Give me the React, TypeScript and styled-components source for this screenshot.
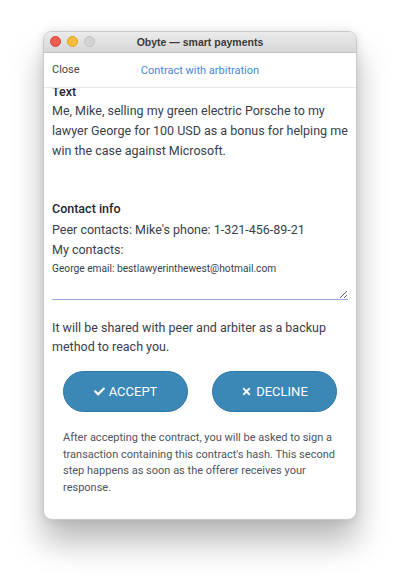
import React from "react";
import styled, { createGlobalStyle } from "styled-components";
import { FaCheck, FaTimes } from "react-icons/fa";

const Global = createGlobalStyle`
  html, body { margin: 0; padding: 0; background: #ffffff; }
  body { font-family: Roboto, "Liberation Sans", sans-serif; }
  * { box-sizing: border-box; }
`;

const Page = styled.div`
  width: 400px;
  height: 578px;
  padding: 31px 43px 0 43px;
  background: #ffffff;
`;

const Window = styled.div`
  width: 314px;
  height: 489px;
  border-radius: 9px;
  background: #ffffff;
  border: 1px solid #c9c9c9;
  box-shadow: 0 22px 32px rgba(0, 0, 0, 0.28), 0 0 10px rgba(0, 0, 0, 0.1);
  overflow: hidden;
  display: flex;
  flex-direction: column;
`;

const TitleBar = styled.div`
  position: relative;
  height: 21px;
  flex: none;
  display: flex;
  align-items: center;
  justify-content: center;
  background: linear-gradient(#ebebeb, #d7d7d7);
  border-bottom: 1px solid #c2c2c2;
`;

const Lights = styled.div`
  position: absolute;
  left: 6px;
  top: 4px;
  display: flex;
  gap: 6px;
`;

const Light = styled.span<{ $c: string; $b: string }>`
  width: 11px;
  height: 11px;
  border-radius: 50%;
  background: ${(p) => p.$c};
  border: 0.5px solid ${(p) => p.$b};
`;

const Title = styled.div`
  font-family: "Liberation Sans", Arial, sans-serif;
  font-weight: bold;
  font-size: 10.5px;
  color: #3b3b3b;
`;

const Header = styled.div`
  position: relative;
  height: 35px;
  flex: none;
  display: flex;
  align-items: center;
  justify-content: center;
  border-bottom: 1px solid #e6e6e6;
`;

const CloseLink = styled.span`
  position: absolute;
  left: 8px;
  top: 10px;
  font-size: 11px;
  color: #444;
`;

const HeaderTitle = styled.span`
  font-size: 11px;
  color: #4a86d8;
`;

const Body = styled.div`
  flex: 1;
  overflow: hidden;
  padding: 0 8px 0 8px;
  color: #3a404b;
`;

const Label = styled.div<{ $top?: number }>`
  font-size: 12.5px;
  font-weight: 500;
  line-height: 16px;
  color: #1f2633;
  margin-top: ${(p) => p.$top ?? 0}px;
`;

const Paragraph = styled.div<{ $top?: number; $lh?: number }>`
  font-size: 12.5px;
  line-height: ${(p) => p.$lh ?? 20}px;
  margin-top: ${(p) => p.$top ?? 0}px;
`;

const TextArea = styled.textarea`
  display: block;
  width: 100%;
  height: 40px;
  margin: 0;
  padding: 2px 0 0 0;
  border: none;
  border-bottom: 1px solid #9aa9dd;
  outline: none;
  resize: vertical;
  font-family: Roboto, "Liberation Sans", sans-serif;
  font-size: 10.2px;
  line-height: 14px;
  color: #3a404b;
  background: transparent;
`;

const Buttons = styled.div`
  display: flex;
  justify-content: center;
  gap: 24px;
  margin-top: 15px;
`;

const Button = styled.button`
  width: 125px;
  height: 41px;
  border-radius: 21px;
  border: 1px solid #2f77a6;
  background: #3b88b6;
  color: #ffffff;
  font-family: Roboto, "Liberation Sans", sans-serif;
  font-size: 13px;
  display: flex;
  align-items: center;
  justify-content: center;
  gap: 4px;
  padding: 0;
  svg { width: 11px; height: 11px; }
`;

const Note = styled.div`
  margin: 18px 13px 0 11px;
  font-size: 11px;
  line-height: 16.5px;
  color: #4e5460;
`;

export default function App() {
  return (
    <Page>
      <Global />
      <Window>
        <TitleBar>
          <Lights>
            <Light $c="#ee5b52" $b="#d8443c" />
            <Light $c="#f5bd3a" $b="#dca22a" />
            <Light $c="#d3d3d3" $b="#c0c0c0" />
          </Lights>
          <Title>Obyte — smart payments</Title>
        </TitleBar>
        <Header>
          <CloseLink>Close</CloseLink>
          <HeaderTitle>Contract with arbitration</HeaderTitle>
        </Header>
        <Body>
          <Label $top={-4}>Text</Label>
          <Paragraph $top={1}>
            Me, Mike, selling my green electric Porsche to my lawyer George for
            100 USD as a bonus for helping me win the case against Microsoft.
          </Paragraph>
          <Label $top={40}>Contact info</Label>
          <Paragraph $top={3}>Peer contacts: Mike's phone: 1-321-456-89-21</Paragraph>
          <Paragraph>My contacts:</Paragraph>
          <TextArea defaultValue="George email: bestlawyerinthewest@hotmail.com" />
          <Paragraph $top={18} $lh={19}>
            It will be shared with peer and arbiter as a backup method to reach
            you.
          </Paragraph>
          <Buttons>
            <Button>
              <FaCheck /> ACCEPT
            </Button>
            <Button>
              <FaTimes /> DECLINE
            </Button>
          </Buttons>
          <Note>
            After accepting the contract, you will be asked to sign a transaction
            containing this contract's hash. This second step happens as soon as
            the offerer receives your response.
          </Note>
        </Body>
      </Window>
    </Page>
  );
}
